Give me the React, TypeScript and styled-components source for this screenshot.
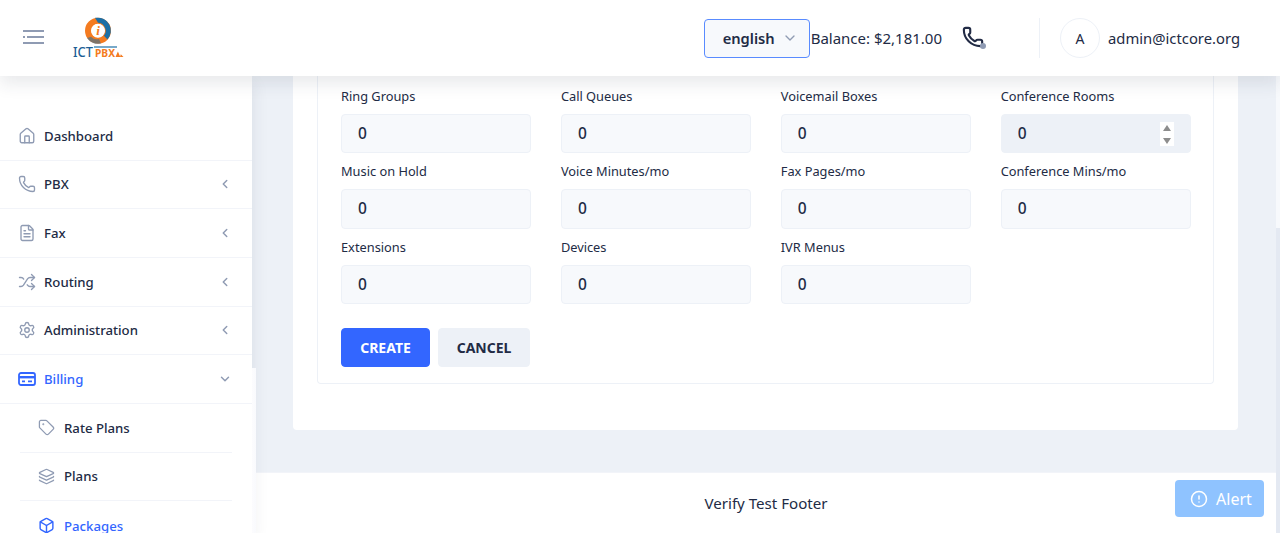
import { FC, ReactNode } from 'react'
import styled, { createGlobalStyle } from 'styled-components'
import {
  Box,
  ChevronDown,
  ChevronLeft,
  CircleAlert,
  FileText,
  House,
  Layers,
  Phone,
  Settings,
  Shuffle,
  Tag,
} from 'lucide-react'

const GlobalStyle = createGlobalStyle`
  html, body {
    margin: 0;
    height: 100%;
    overflow: hidden;
    font-family: "Noto Sans", "Open Sans", sans-serif;
    color: #222b45;
    background: #edf1f7;
  }
  * { box-sizing: border-box; }
`

const Layout = styled.div`
  height: 100vh;
  display: flex;
  flex-direction: column;
`

const Header = styled.header`
  height: 76px;
  flex: none;
  display: flex;
  align-items: center;
  justify-content: space-between;
  padding: 0 40px 0 23px;
  background: #fff;
  box-shadow: 0 8px 16px 0 rgba(44, 51, 73, 0.1);
  position: relative;
  z-index: 3;
`

const Brand = styled.div`
  display: flex;
  align-items: center;
  gap: 27px;
`

const MenuButton = styled.svg`
  width: 22px;
  height: 16px;
  display: block;
  margin-bottom: 2px;
`

const HeaderRight = styled.div`
  display: flex;
  align-items: center;
`

const LangSelect = styled.div`
  width: 106px;
  height: 39px;
  display: flex;
  align-items: center;
  justify-content: space-between;
  padding: 0 11px 0 18px;
  background: #f7f9fc;
  border: 1px solid #598bff;
  border-radius: 4px;
  font-size: 14.7px;
  font-weight: 600;
  color: #222b45;
  svg {
    color: #8f9bb3;
  }
`

const Balance = styled.span`
  font-size: 15px;
  line-height: 20px;
  margin-left: 1px;
`

const CallStatus = styled.div`
  position: relative;
  margin-left: 20px;
  width: 24px;
  height: 24px;
  svg {
    display: block;
    color: #222b45;
  }
`

const StatusDot = styled.span`
  position: absolute;
  right: 0;
  bottom: 1px;
  width: 6px;
  height: 6px;
  border-radius: 50%;
  background: #8f9bb3;
`

const Divider = styled.div`
  width: 1px;
  height: 40px;
  margin: 0 20px 0 53px;
  background: #edf1f7;
`

const Avatar = styled.div`
  width: 40px;
  height: 40px;
  display: flex;
  align-items: center;
  justify-content: center;
  border: 1px solid #edf1f7;
  border-radius: 50%;
  font-size: 14px;
`

const UserName = styled.span`
  margin-left: 8px;
  font-size: 14.8px;
  line-height: 20px;
`

const Body = styled.div`
  flex: 1;
  min-height: 0;
  display: flex;
`

const Sidebar = styled.nav`
  width: 252px;
  flex: none;
  padding-top: 36px;
  background: #fff;
  box-shadow: 0 8px 16px 0 rgba(44, 51, 73, 0.1);
  position: relative;
  z-index: 2;
  overflow: visible;

  &::after {
    content: '';
    position: absolute;
    left: 252px;
    top: 292px;
    bottom: 0;
    width: 4px;
    background: linear-gradient(to right, #fcfcfe, #f9fafd);
  }
`

const NavRow = styled.div<{ $active?: boolean; $sub?: boolean; $last?: boolean }>`
  height: 48.66px;
  display: flex;
  align-items: center;
  gap: ${({ $sub }) => ($sub ? '9px' : '8px')};
  margin: ${({ $sub }) => ($sub ? '0 20px' : '0')};
  padding: ${({ $sub }) => ($sub ? '0 0 0 18px' : '0 19px 0 18px')};
  border-bottom: ${({ $last }) => ($last ? 'none' : '1px solid #f2f4f9')};
  font-size: 13.2px;
  font-weight: 500;
  color: ${({ $active }) => ($active ? '#3366ff' : '#222b45')};
  > svg:first-child {
    flex: none;
    color: ${({ $active }) => ($active ? '#3366ff' : '#8f9bb3')};
  }
`

const NavLabel = styled.span`
  flex: 1;
  line-height: 20px;
`

const NavChevron = styled.span`
  display: flex;
  margin-right: 1px;
  color: #8f9bb3;
`

const Main = styled.main`
  flex: 1;
  min-width: 0;
  display: flex;
  flex-direction: column;
`

const Content = styled.div`
  flex: 1;
  min-height: 0;
  padding: 0 38px 42px 41px;
  background: #edf1f7;
`

const Card = styled.section`
  height: 100%;
  padding: 0 24px 46px;
  background: #fff;
  border-radius: 0 0 4px 4px;
`

const InnerBox = styled.div`
  height: 100%;
  padding: 10px 22.5px 0 23px;
  border: 1px solid #edf1f7;
  border-top: none;
  border-radius: 0 0 4px 4px;
`

const FieldGrid = styled.div`
  display: grid;
  grid-template-columns: repeat(4, 1fr);
  column-gap: 30px;
  row-gap: 8px;
`

const Field = styled.label`
  display: block;
`

const FieldLabel = styled.span`
  display: block;
  margin: 0 0 8px;
  font-size: 12.8px;
  line-height: 20px;
  color: #222b45;
`

const InputWrap = styled.div`
  position: relative;
`

const NumberInput = styled.input<{ $focused?: boolean }>`
  display: block;
  width: 100%;
  height: 39.3px;
  padding: 0 16px 1px;
  background: ${({ $focused }) => ($focused ? '#edf1f7' : '#f7f9fc')};
  border: 1px solid #edf1f7;
  border-radius: 4px;
  outline: none;
  font-family: inherit;
  font-size: 15.5px;
  font-weight: 500;
  color: #222b45;
`

const Spinner = styled.div`
  position: absolute;
  top: 8px;
  right: 17px;
  width: 14px;
  height: 24px;
  display: flex;
  flex-direction: column;
  align-items: center;
  justify-content: center;
  gap: 7px;
  background: #fff;
`

const SpinArrow = styled.span<{ $down?: boolean }>`
  width: 0;
  height: 0;
  border-left: 4.5px solid transparent;
  border-right: 4.5px solid transparent;
  border-${({ $down }) => ($down ? 'top' : 'bottom')}: 6px solid #8d8d8d;
`

const Actions = styled.div`
  display: flex;
  gap: 8px;
  margin-top: 24px;
`

const ActionButton = styled.button<{ $primary?: boolean }>`
  height: 39.4px;
  width: ${({ $primary }) => ($primary ? '89px' : '92px')};
  border: 1px solid ${({ $primary }) => ($primary ? '#3366ff' : '#edf1f7')};
  border-radius: 4px;
  background: ${({ $primary }) => ($primary ? '#3366ff' : '#edf1f7')};
  color: ${({ $primary }) => ($primary ? '#fff' : '#222b45')};
  font-family: inherit;
  font-size: 14px;
  font-weight: 700;
`

const Footer = styled.footer`
  height: 61px;
  flex: none;
  display: flex;
  align-items: center;
  justify-content: center;
  background: #fff;
  border-top: 1px solid #f2f4f9;
  font-size: 15.1px;
  padding-left: 4px;
  color: #222b45;
`

const ScrollTrack = styled.div`
  width: 4px;
  flex: none;
  position: relative;
  background: #f7f9fc;
`

const ScrollThumb = styled.div`
  position: absolute;
  top: 152px;
  bottom: 0;
  left: 0;
  right: 0;
  background: #e4e9f2;
`

const AlertButton = styled.button`
  position: fixed;
  right: 16px;
  bottom: 16px;
  width: 89px;
  height: 37px;
  display: flex;
  align-items: center;
  justify-content: center;
  gap: 8px;
  padding-left: 9px;
  background: #8fc3ff;
  border: none;
  border-radius: 4px;
  color: #fff;
  font-family: inherit;
  font-size: 16px;
  z-index: 4;
`

const BillingIcon: FC = () => (
  <svg width="18" height="18" viewBox="0 0 18 18" fill="none">
    <rect x="1" y="3" width="16" height="12" rx="2" stroke="currentColor" strokeWidth="1.8" />
    <rect x="1" y="6" width="16" height="2.4" fill="currentColor" />
    <path d="M4 11.4h3M10 11.4h4" stroke="currentColor" strokeWidth="1.8" />
  </svg>
)

const Logo: FC = () => (
  <svg width="52" height="44" viewBox="0 0 52 44">
    <circle cx="26" cy="14.7" r="10" fill="none" stroke="#f47b20" strokeWidth="6" />
    <path d="M24 1.8a13 13 0 0 1 11.5 21.6l-3.6-3.6a8 8 0 0 0-5.9-13l-3-5z" fill="#1d6fa5" />
    <path d="M15 22a13 13 0 0 0 14 5.4l-2-4.4a8 8 0 0 1-8-2.2z" fill="#1d6fa5" opacity="0.55" />
    <circle cx="26" cy="14.7" r="6.6" fill="#fff" />
    <text x="26" y="19" textAnchor="middle" fontFamily="Liberation Serif, serif" fontSize="13" fontStyle="italic" fontWeight="700" fill="#f47b20">i</text>
    <text x="1" y="41" fontFamily="Noto Sans, sans-serif" fontSize="15" fontWeight="500" fill="#1d5f96" textLength="20" lengthAdjust="spacingAndGlyphs">ICT</text>
    <path d="M22 31h23" stroke="#1d6fa5" strokeWidth="1.2" />
    <text x="23" y="41" fontFamily="Noto Sans, sans-serif" fontSize="9.8" fontWeight="700" fill="#f47b20" textLength="20" lengthAdjust="spacingAndGlyphs">PBX</text>
    <path d="M43.5 41l2.4-5.5 2.4 5.5zM48 41l.8-2.8 2.7 2.8z" fill="#f47b20" />
  </svg>
)

interface NavItemProps {
  icon: ReactNode
  label: string
  active?: boolean
  sub?: boolean
  last?: boolean
  chevron?: 'left' | 'down'
}

const NavItem: FC<NavItemProps> = ({ icon, label, active, sub, last, chevron }) => (
  <NavRow $active={active} $sub={sub} $last={last}>
    {icon}
    <NavLabel>{label}</NavLabel>
    {chevron && (
      <NavChevron>
        {chevron === 'left' ? (
          <ChevronLeft size={14} strokeWidth={2.5} />
        ) : (
          <ChevronDown size={14} strokeWidth={2.5} />
        )}
      </NavChevron>
    )}
  </NavRow>
)

const fields = [
  'Ring Groups',
  'Call Queues',
  'Voicemail Boxes',
  'Conference Rooms',
  'Music on Hold',
  'Voice Minutes/mo',
  'Fax Pages/mo',
  'Conference Mins/mo',
  'Extensions',
  'Devices',
  'IVR Menus',
]

const App: FC = () => (
  <Layout>
    <GlobalStyle />
    <Header>
      <Brand>
        <MenuButton viewBox="0 0 22 16">
          <g stroke="#8f9bb3" strokeWidth="2" fill="none">
            <path d="M0 2h21M0 14h21" />
            <path d="M0 8h2M4 8h17" />
          </g>
        </MenuButton>
        <Logo />
      </Brand>
      <HeaderRight>
        <LangSelect>
          english
          <ChevronDown size={16} />
        </LangSelect>
        <Balance>Balance: $2,181.00</Balance>
        <CallStatus>
          <Phone size={22} strokeWidth={2.3} />
          <StatusDot />
        </CallStatus>
        <Divider />
        <Avatar>A</Avatar>
        <UserName>admin@ictcore.org</UserName>
      </HeaderRight>
    </Header>
    <Body>
      <Sidebar>
        <NavItem icon={<House size={18} strokeWidth={1.8} />} label="Dashboard" />
        <NavItem icon={<Phone size={18} strokeWidth={1.8} />} label="PBX" chevron="left" />
        <NavItem icon={<FileText size={18} strokeWidth={1.8} />} label="Fax" chevron="left" />
        <NavItem icon={<Shuffle size={18} strokeWidth={1.8} />} label="Routing" chevron="left" />
        <NavItem icon={<Settings size={18} strokeWidth={1.8} />} label="Administration" chevron="left" />
        <NavItem icon={<BillingIcon />} label="Billing" active chevron="down" />
        <NavItem sub icon={<Tag size={17} strokeWidth={1.8} />} label="Rate Plans" />
        <NavItem sub icon={<Layers size={17} strokeWidth={1.8} />} label="Plans" />
        <NavItem sub active last icon={<Box size={17} strokeWidth={2} />} label="Packages" />
      </Sidebar>
      <Main>
        <Content>
          <Card>
            <InnerBox>
              <FieldGrid>
                {fields.map((name) => (
                  <Field key={name}>
                    <FieldLabel>{name}</FieldLabel>
                    <InputWrap>
                      <NumberInput readOnly value="0" $focused={name === 'Conference Rooms'} />
                      {name === 'Conference Rooms' && (
                        <Spinner>
                          <SpinArrow />
                          <SpinArrow $down />
                        </Spinner>
                      )}
                    </InputWrap>
                  </Field>
                ))}
              </FieldGrid>
              <Actions>
                <ActionButton $primary>CREATE</ActionButton>
                <ActionButton>CANCEL</ActionButton>
              </Actions>
            </InnerBox>
          </Card>
        </Content>
        <Footer>Verify Test Footer</Footer>
      </Main>
      <ScrollTrack>
        <ScrollThumb />
      </ScrollTrack>
    </Body>
    <AlertButton>
      <CircleAlert size={18} />
      Alert
    </AlertButton>
  </Layout>
)

export default App
